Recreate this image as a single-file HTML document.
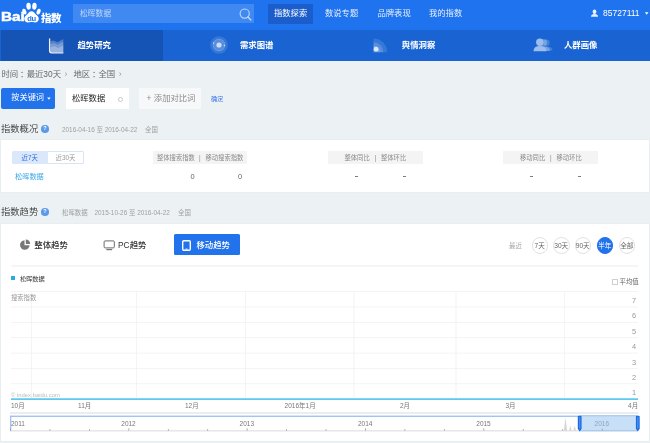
<!DOCTYPE html>
<html lang="zh-CN">
<head>
<meta charset="utf-8">
<title>百度指数</title>
<style>
*{margin:0;padding:0;box-sizing:border-box;}
html,body{width:650px;height:443px;overflow:hidden;background:#ecf1f4;}
body{filter:blur(0.35px);position:relative;font-family:"Liberation Sans","Noto Sans CJK SC",sans-serif;font-size:7.8px;color:#333;}
.abs{position:absolute;white-space:nowrap;}
#top{left:0;top:0;width:650px;height:30px;background:#1f73ef;}
#nav{left:0;top:29.5px;width:650px;height:31.5px;background:#1964d2;}
#navact{left:0.5px;top:29.5px;width:162.5px;height:31.5px;background:#1553b5;}
.w{color:#fff;}
.t{line-height:10px;height:10px;}
#search{left:73px;top:4px;width:181px;height:19px;background:#4089f3;}
#tabact{left:268px;top:4px;width:45px;height:19.5px;background:#1b5ecb;border-radius:1px;}
.toptab{top:8.3px;font-size:8.3px;color:#fff;}
.navt{top:40.3px;font-size:8.4px;color:#fff;font-weight:bold;}

.cl{position:relative;left:1.800px;}
.arr{color:#999;margin:0 6px 0 3.500px;}
.hd{font-size:9.3px;line-height:14px;color:#333;font-weight:350;}
.qi{width:7.600px;height:7.600px;border-radius:50%;background:#5d99ea;}
.qm{width:7.600px;height:7.600px;line-height:7.600px;text-align:center;color:#fff;font-size:5.500px;font-weight:bold;}
.sm{font-size:6.4px;line-height:9px;color:#a0a0a0;}
.g{color:#8a8a8a;font-size:6.300px;}
.v{color:#666;font-size:7.400px;}
.gb{top:151px;height:12.500px;background:#f4f4f4;}
.dash{top:175.800px;width:3px;height:1.200px;background:#7a7a7a;}

.tt{top:239.800px;font-size:8.400px;line-height:11px;font-weight:500;}
.cb{top:237.300px;width:16.500px;height:16.500px;border-radius:50%;border:0.7px solid #e2e2e2;background:#fff;font-size:6.600px;line-height:15.500px;text-align:center;color:#666;}
.cb.on{background:#2272ec;border-color:#2272ec;color:#fff;}
</style>
</head>
<body>
<div class="abs" id="top"></div>
<div class="abs" id="nav"></div>
<div class="abs" id="navact"></div>
<div class="abs" id="search"></div>
<div class="abs" id="tabact"></div>

<!-- logo -->
<div class="abs w" style="left:0.800px;top:10.300px;font-size:12px;line-height:14px;font-weight:bold;-webkit-text-stroke:0.450px #fff;transform:scaleX(1.27);transform-origin:0 0;">Bai</div>
<svg class="abs" style="left:21px;top:1px;" width="21" height="23" viewBox="21 1 21 23">
  <g fill="#fff">
    <ellipse cx="28.600" cy="6.200" rx="2.250" ry="3.500" transform="rotate(-4 28.600 6.200)"/>
    <ellipse cx="34.400" cy="6.200" rx="2.250" ry="3.500" transform="rotate(4 34.400 6.200)"/>
    <ellipse cx="24.400" cy="11.600" rx="1.900" ry="3" transform="rotate(-20 24.400 11.600)"/>
    <ellipse cx="38.600" cy="11.600" rx="1.900" ry="3" transform="rotate(20 38.600 11.600)"/>
    <path d="M31.500 11.200c1.800 0 2.800 1.400 3.900 2.800 1.400 1.600 3.400 2.400 3.400 4.700 0 2.400-1.800 3.700-3.800 3.700-1.400 0-2.300-.4-3.500-.4s-2.100.4-3.500.4c-2 0-3.800-1.300-3.800-3.700 0-2.300 2-3.100 3.400-4.700 1.100-1.400 2.100-2.800 3.900-2.800z"/>
  </g>
  <text x="31.500" y="20.700" font-size="7.600" font-weight="bold" fill="#1f73ef" text-anchor="middle" font-family="Liberation Sans, sans-serif" letter-spacing="-0.3">du</text>
</svg>
<div class="abs w" style="left:41px;top:12px;font-size:10.5px;line-height:13px;font-weight:900;letter-spacing:-0.4px;">指数</div>

<div class="abs" style="left:80px;top:8.5px;font-size:7.8px;line-height:10px;color:#c3d9fa;">松晖数据</div>
<svg class="abs" style="left:238px;top:7px;" width="15" height="15" viewBox="238 7 15 15"><circle cx="244.700" cy="13.600" r="4.600" fill="none" stroke="#c4daf9" stroke-width="1.100"/><path d="M248 17L250.800 19.900" stroke="#c4daf9" stroke-width="1.400" stroke-linecap="round"/></svg>

<div class="abs toptab t" style="left:274px;">指数探索</div>
<div class="abs toptab t" style="left:325px;color:#e6effd;">数说专题</div>
<div class="abs toptab t" style="left:377.500px;color:#e6effd;">品牌表现</div>
<div class="abs toptab t" style="left:429px;color:#e6effd;">我的指数</div>
<div class="abs w t" style="left:603px;top:8.3px;font-size:8.500px;">85727111</div>

<div class="abs navt t" style="left:77.5px;">趋势研究</div>
<div class="abs navt t" style="left:240px;">需求图谱</div>
<div class="abs navt t" style="left:401.800px;">舆情洞察</div>
<div class="abs navt t" style="left:564px;">人群画像</div>


<!-- nav icons -->
<svg class="abs" style="left:48px;top:37px;" width="17" height="17" viewBox="48 37 17 17">
  <path d="M50.300 41.300L53.500 40.500L57.500 42.300L63.300 39L63.300 52.300L50.300 52.300Z" fill="#fff" fill-opacity="0.26"/>
  <path d="M50.300 44.200L54 43L57.500 44.800L63.300 41.800L63.300 52.300L50.300 52.300Z" fill="#fff" fill-opacity="0.22"/>
  <path d="M50.300 47.500L54 46L58 48L63.300 45.500L63.300 52.300L50.300 52.300Z" fill="#fff" fill-opacity="0.24"/>
  <path d="M49.600 38.600L49.600 50.800Q49.600 52.800 51.600 52.800L63.400 52.800" fill="none" stroke="#fff" stroke-opacity="0.92" stroke-width="1.300"/>
</svg>
<svg class="abs" style="left:209px;top:35px;" width="20" height="20" viewBox="-10 -10 20 20">
  <circle r="8.800" fill="#fff" fill-opacity="0.13"/>
  <circle r="6.200" fill="#fff" fill-opacity="0.16"/>
  <circle r="5.800" fill="none" stroke="#fff" stroke-opacity="0.18" stroke-width="0.700"/>
  <circle r="2.600" fill="#fff" fill-opacity="0.700"/>
  <circle cx="-5.400" cy="-2" r="0.700" fill="#fff" fill-opacity="0.700"/>
  <circle cx="5.400" cy="0.500" r="0.700" fill="#fff" fill-opacity="0.700"/>
</svg>
<svg class="abs" style="left:372px;top:37px;" width="17" height="17" viewBox="372 37 17 17">
  <path d="M373.500 52.200L373.500 38.500A13.700 13.700 0 0 1 387.200 52.200Z" fill="#fff" fill-opacity="0.13"/>
  <path d="M373.500 52.200L373.500 42.200A10 10 0 0 1 383.500 52.200Z" fill="#fff" fill-opacity="0.16"/>
  <path d="M373.500 52.200L373.500 45.500A6.700 6.700 0 0 1 380.200 52.200Z" fill="#fff" fill-opacity="0.18"/>
  <circle cx="376.100" cy="49.200" r="2.400" fill="#fff" fill-opacity="0.750"/>
</svg>
<svg class="abs" style="left:531px;top:36px;" width="22" height="18" viewBox="531 36 22 18">
  <g fill="#fff" fill-opacity="0.18"><circle cx="546.500" cy="42.800" r="3.200"/><path d="M540.500 51Q540.500 46.500 546.500 46.500Q552.500 46.500 552.500 50.500Z"/></g>
  <g fill="#fff" fill-opacity="0.28"><circle cx="543.500" cy="42.500" r="3.500"/><path d="M537 51Q537 46.300 543.500 46.300Q550 46.300 550 51Z"/></g>
  <g fill="#9dbdee"><circle cx="539.800" cy="42.300" r="3.700"/><path d="M533.500 51.200Q533.500 46 539.800 46Q546.500 46 546.500 51.200Z"/></g>
</svg>
<svg class="abs" style="left:590px;top:9px;" width="9" height="9" viewBox="590 9 9 9">
  <g fill="#fff" fill-opacity="0.900"><ellipse cx="594.500" cy="11.800" rx="1.900" ry="2.200"/><path d="M591 16.700Q591 14 594.500 14Q598 14 598 16.700Z"/></g>
</svg>
<svg class="abs" style="left:644px;top:11px;" width="6" height="5" viewBox="644 11 6 5"><path d="M644.900 12.300L648.500 12.300L646.700 14.700Z" fill="#fff"/></svg>
<!-- filter row -->
<div class="abs t" style="left:1.5px;top:69.3px;font-size:8.4px;color:#686868;">时间<span class="cl">：</span>最近30天<span class="arr">›</span>地区<span class="cl">：</span>全国<span class="arr">›</span></div>

<div class="abs" style="left:1px;top:88px;width:54px;height:20.5px;background:#2272ec;border-radius:2px;"></div>
<div class="abs w t" style="left:11.3px;top:93.3px;font-size:8.2px;">按关键词</div>
<svg class="abs" style="left:46px;top:96px;" width="6" height="5" viewBox="46 96 6 5"><path d="M47.100 97.400L50.700 97.400L48.900 99.800Z" fill="#fff"/></svg>

<div class="abs" style="left:65.500px;top:88px;width:63.500px;height:21px;background:#fff;"></div>
<div class="abs t" style="left:72px;top:93.3px;font-size:8.3px;color:#222;">松晖数据</div>
<div class="abs" style="left:118.100px;top:96.500px;width:5px;height:5px;border-radius:50%;border:0.9px solid #c8c8c8;"></div>

<div class="abs" style="left:138.800px;top:88px;width:62px;height:21px;background:#f6f8fa;"></div>
<div class="abs t" style="left:146.500px;top:93.300px;font-size:8.3px;color:#8a8a8a;">+<span style="margin-left:2.500px">添加对比词</span></div>
<div class="abs t" style="left:211px;top:93.500px;font-size:6.200px;color:#3c78ea;">确定</div>

<!-- overview -->
<div class="abs hd" style="left:1px;top:122px;">指数概况</div>
<div class="abs qi" style="left:41.150px;top:125.300px;"></div><div class="abs qm" style="left:41.150px;top:125.300px;">?</div>
<div class="abs sm" style="left:62px;top:124.500px;">2016-04-16 至 2016-04-22</div>
<div class="abs sm" style="left:145px;top:124.500px;">全国</div>

<div class="abs" style="left:1px;top:140px;width:648px;height:52.300px;background:#fff;box-shadow:0 0 0 0.600px #e4eaee;"></div>
<div class="abs" style="left:11.500px;top:151px;width:36px;height:12.500px;background:#dbe8fb;border-radius:1.5px 0 0 1.5px;"></div>
<div class="abs" style="left:47.500px;top:151px;width:36.500px;height:12.500px;background:#fff;border:0.7px solid #d9e5f7;border-left:0;border-radius:0 1.5px 1.5px 0;"></div>
<div class="abs sm" style="left:21.500px;top:153px;color:#2b6de0;">近7天</div>
<div class="abs sm" style="left:55.500px;top:153px;color:#999;">近30天</div>
<div class="abs t" style="left:15px;top:172px;font-size:7.2px;color:#3aa5e8;">松晖数据</div>

<div class="abs gb" style="left:152.500px;width:94.500px;"></div>
<div class="abs gb" style="left:327.500px;width:95px;"></div>
<div class="abs gb" style="left:503px;width:95px;"></div>
<div class="abs sm g" style="left:157px;top:153px;">整体搜索指数</div><div class="abs sm g" style="left:199px;top:152.500px;">|</div><div class="abs sm g" style="left:205.500px;top:153px;">移动搜索指数</div>
<div class="abs sm g" style="left:344.500px;top:153px;">整体同比</div><div class="abs sm g" style="left:374.500px;top:152.500px;">|</div><div class="abs sm g" style="left:381px;top:153px;">整体环比</div>
<div class="abs sm g" style="left:520px;top:153px;">移动同比</div><div class="abs sm g" style="left:550px;top:152.500px;">|</div><div class="abs sm g" style="left:556.500px;top:153px;">移动环比</div>
<div class="abs sm v" style="left:190.500px;top:172.300px;">0</div><div class="abs sm v" style="left:238px;top:172.300px;">0</div>
<div class="abs dash" style="left:354.500px;"></div><div class="abs dash" style="left:402.500px;"></div>
<div class="abs dash" style="left:530px;"></div><div class="abs dash" style="left:578px;"></div>

<!-- trend -->
<div class="abs hd" style="left:1px;top:205px;">指数趋势</div>
<div class="abs qi" style="left:41.150px;top:208.300px;"></div><div class="abs qm" style="left:41.150px;top:208.300px;">?</div>
<div class="abs sm" style="left:62px;top:207.500px;">松晖数据</div>
<div class="abs sm" style="left:94.500px;top:207.500px;">2015-10-26 至 2016-04-22</div>
<div class="abs sm" style="left:178px;top:207.500px;">全国</div>

<div class="abs" style="left:1px;top:223.800px;width:648px;height:217.200px;background:#fff;box-shadow:0 0 0 0.600px #e4eaee;"></div>

<svg class="abs" style="left:0;top:223.500px;" width="650" height="217" viewBox="0 223.500 650 217" font-family="Liberation Sans, Noto Sans CJK SC, sans-serif">
<rect x="11.500" y="265" width="626.500" height="1" fill="#ebebeb"/>
<rect x="11" y="290.75" width="627" height="0.7" fill="#efefef"/>
<rect x="11" y="306.12" width="627" height="0.7" fill="#efefef"/>
<rect x="11" y="321.49" width="627" height="0.7" fill="#efefef"/>
<rect x="11" y="336.86" width="627" height="0.7" fill="#efefef"/>
<rect x="11" y="352.23" width="627" height="0.7" fill="#efefef"/>
<rect x="11" y="367.60" width="627" height="0.7" fill="#efefef"/>
<rect x="11" y="382.97" width="627" height="0.7" fill="#efefef"/>
<rect x="31.35" y="291.100" width="0.7" height="107" fill="#efefef"/>
<rect x="136.15" y="291.100" width="0.7" height="107" fill="#efefef"/>
<rect x="245.15" y="291.100" width="0.7" height="107" fill="#efefef"/>
<rect x="353.65" y="291.100" width="0.7" height="107" fill="#efefef"/>
<rect x="455.65" y="291.100" width="0.7" height="107" fill="#efefef"/>
<rect x="564.15" y="291.100" width="0.7" height="107" fill="#efefef"/>
<text x="636" y="302.5" font-size="7.400" fill="#999" text-anchor="end">7</text>
<text x="636" y="317.9" font-size="7.400" fill="#999" text-anchor="end">6</text>
<text x="636" y="333.2" font-size="7.400" fill="#999" text-anchor="end">5</text>
<text x="636" y="348.6" font-size="7.400" fill="#999" text-anchor="end">4</text>
<text x="636" y="364.0" font-size="7.400" fill="#999" text-anchor="end">3</text>
<text x="636" y="379.4" font-size="7.400" fill="#999" text-anchor="end">2</text>
<text x="636" y="394.7" font-size="7.400" fill="#999" text-anchor="end">1</text>
<text x="11" y="299" font-size="6.300" fill="#999">搜索指数</text>
<text x="11" y="396.800" font-size="5.900" fill="#bcbcbc">© index.baidu.com</text>
<rect x="11" y="397.800" width="627" height="1.600" fill="#4fc4ec"/>
<text x="11" y="407.200" font-size="6.500" fill="#777" text-anchor="start">10月</text>
<text x="78" y="407.200" font-size="6.500" fill="#777" text-anchor="start">11月</text>
<text x="185" y="407.200" font-size="6.500" fill="#777" text-anchor="start">12月</text>
<text x="284.6" y="407.200" font-size="6.500" fill="#777" text-anchor="start">2016年1月</text>
<text x="400" y="407.200" font-size="6.500" fill="#777" text-anchor="start">2月</text>
<text x="505.5" y="407.200" font-size="6.500" fill="#777" text-anchor="start">3月</text>
<text x="638.2" y="407.200" font-size="6.500" fill="#777" text-anchor="end">4月</text>
<rect x="10" y="412" width="628.300" height="1" fill="#dcdcdc"/>
<rect x="10.500" y="415.200" width="627" height="1" fill="#7eaaee"/>
<rect x="10.300" y="415.200" width="0.900" height="15.500" fill="#7eaaee"/>
<rect x="10.500" y="430" width="627" height="0.800" fill="#cfcfcf"/>
<rect x="10.1" y="427.8" width="0.800" height="2.4" fill="#999"/>
<rect x="49.5" y="428.6" width="0.800" height="1.6" fill="#999"/>
<rect x="89.0" y="428.6" width="0.800" height="1.6" fill="#999"/>
<rect x="128.4" y="427.8" width="0.800" height="2.4" fill="#999"/>
<rect x="167.9" y="428.6" width="0.800" height="1.6" fill="#999"/>
<rect x="207.3" y="428.6" width="0.800" height="1.6" fill="#999"/>
<rect x="246.7" y="427.8" width="0.800" height="2.4" fill="#999"/>
<rect x="286.2" y="428.6" width="0.800" height="1.6" fill="#999"/>
<rect x="325.6" y="428.6" width="0.800" height="1.6" fill="#999"/>
<rect x="365.1" y="427.8" width="0.800" height="2.4" fill="#999"/>
<rect x="404.5" y="428.6" width="0.800" height="1.6" fill="#999"/>
<rect x="443.9" y="428.6" width="0.800" height="1.6" fill="#999"/>
<rect x="483.4" y="427.8" width="0.800" height="2.4" fill="#999"/>
<rect x="522.8" y="428.6" width="0.800" height="1.6" fill="#999"/>
<rect x="562.3" y="428.6" width="0.800" height="1.6" fill="#999"/>
<rect x="601.7" y="427.8" width="0.800" height="2.4" fill="#999"/>
<path d="M563.800 430.200L565.500 417L567.200 430.200ZM569 430.200L570.300 425L571.600 430.200ZM573.400 430.200L574.700 425.300L576 430.200Z" fill="#d6d6d6"/>
<rect x="580" y="415.200" width="57.500" height="15.300" fill="#c7e0f7"/>
<rect x="580" y="415" width="57.500" height="0.700" fill="#8db6ea"/>
<rect x="580" y="430" width="57.500" height="0.700" fill="#8db6ea"/>
<text x="11" y="425.500" font-size="6.500" fill="#777">2011</text>
<text x="128.5" y="425.500" font-size="6.500" fill="#777" text-anchor="middle">2012</text>
<text x="246.8" y="425.500" font-size="6.500" fill="#777" text-anchor="middle">2013</text>
<text x="365.2" y="425.500" font-size="6.500" fill="#777" text-anchor="middle">2014</text>
<text x="483.5" y="425.500" font-size="6.500" fill="#777" text-anchor="middle">2015</text>
<text x="601.8" y="425.500" font-size="6.500" fill="#8ea5bc" text-anchor="middle">2016</text>
<rect x="601.800" y="428" width="0.800" height="2.200" fill="#8aa0b8"/>
<path d="M577.8 416.300Q577.8 415.300 578.8 415.300L580.5999999999999 415.300Q581.5999999999999 415.300 581.5999999999999 416.300L581.5999999999999 428.300L579.6999999999999 431L577.8 428.300Z" fill="#1b6be6"/>
<rect x="579.0999999999999" y="416.500" width="1.200" height="11.500" fill="#4d93f3"/>
<path d="M635.9 416.300Q635.9 415.300 636.9 415.300L638.6999999999999 415.300Q639.6999999999999 415.300 639.6999999999999 416.300L639.6999999999999 428.300L637.8 431L635.9 428.300Z" fill="#1b6be6"/>
<rect x="637.1999999999999" y="416.500" width="1.200" height="11.500" fill="#4d93f3"/>
</svg>
<!-- trend tabs -->
<svg class="abs" style="left:19px;top:239px;" width="12" height="12" viewBox="19 239 12 12"><path d="M24.500 240.200A4.800 4.800 0 1 0 29.600 245.300L24.500 245.300Z" fill="#777"/><path d="M25.800 239.600A4.300 4.300 0 0 1 30.200 244L25.800 244Z" fill="#777"/></svg>
<div class="abs tt" style="left:34.300px;color:#333;">整体趋势</div>
<svg class="abs" style="left:103px;top:240px;" width="13" height="11" viewBox="103 240 13 11"><rect x="104.100" y="240.900" width="10.200" height="7" rx="1" fill="none" stroke="#6a6a6a" stroke-width="1"/><rect x="106.300" y="249.100" width="5.800" height="1.100" fill="#6a6a6a"/></svg>
<div class="abs tt" style="left:118px;color:#333;">PC趋势</div>
<div class="abs" style="left:173.600px;top:234.400px;width:66.500px;height:20.800px;background:#2272ec;border-radius:1.5px;"></div>
<svg class="abs" style="left:181.500px;top:239.500px;" width="9" height="11" viewBox="0 0 9 11"><rect x="0.700" y="0.700" width="7.600" height="9.600" rx="1.200" fill="none" stroke="#fff" stroke-width="1.400"/><rect x="3.500" y="8.600" width="2" height="1" fill="#fff"/></svg>
<div class="abs tt w" style="left:196.500px;">移动趋势</div>

<div class="abs sm" style="left:509px;top:241px;">最近</div>
<div class="abs cb" style="left:531.500px;">7天</div>
<div class="abs cb" style="left:553px;">30天</div>
<div class="abs cb" style="left:574.500px;">90天</div>
<div class="abs cb on" style="left:596.500px;">半年</div>
<div class="abs cb" style="left:618.500px;">全部</div>

<div class="abs" style="left:11px;top:276px;width:4px;height:4px;background:#29abe2;"></div>
<div class="abs sm" style="left:20px;top:273.500px;color:#333;font-size:6.200px;">松晖数据</div>
<div class="abs" style="left:611.800px;top:278.800px;width:6px;height:6px;border:0.6px solid #cecece;background:#fff;"></div>
<div class="abs sm" style="left:619.500px;top:277px;color:#666;">平均值</div>

</body>
</html>
